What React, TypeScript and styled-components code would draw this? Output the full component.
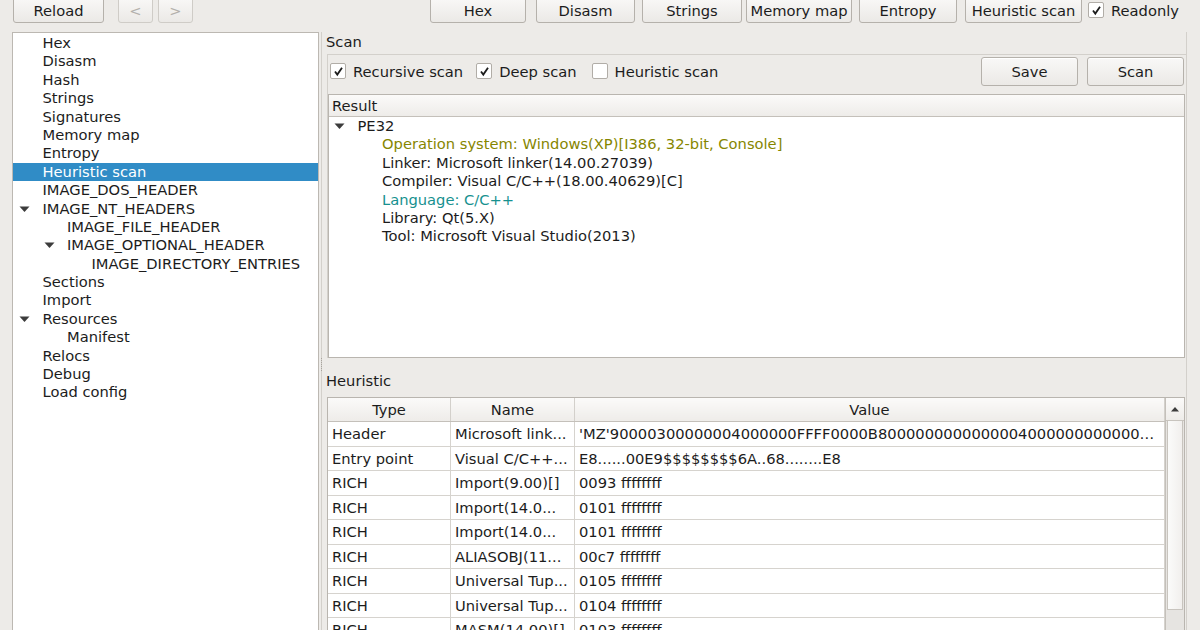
import React from "react";
import styled, { createGlobalStyle } from "styled-components";

const GlobalStyle = createGlobalStyle`
  html, body {
    margin: 0;
    padding: 0;
    background: #edebe8;
    font-family: "DejaVu Sans", "Noto Sans", sans-serif;
    font-size: 14.7px;
    color: #1c1c1c;
    overflow: hidden;
  }
`;

const Window = styled.div`
  width: 1200px;
  height: 630px;
  display: flex;
  flex-direction: column;
  overflow: hidden;
`;

const Toolbar = styled.div`
  display: flex;
  align-items: flex-start;
  height: 30px;
  margin-top: -3px;
  padding: 0 21px 0 13px;
`;

const Spacer = styled.div`
  flex: 1;
`;

const Button = styled.button<{ $w: number; $h?: number; $gap?: number }>`
  width: ${(p) => p.$w}px;
  height: ${(p) => p.$h ?? 26}px;
  margin-right: ${(p) => p.$gap ?? 0}px;
  padding: 0;
  font: inherit;
  color: ${(p) => (p.disabled ? "#b3b0ab" : "#1c1c1c")};
  background: linear-gradient(#f9f8f7, #ebe9e6);
  border: 1px solid ${(p) => (p.disabled ? "#cfccc7" : "#b5b1ab")};
  border-radius: 3px;
  box-shadow: inset 0 1px 0 #ffffff;
  white-space: nowrap;
`;

const CheckRow = styled.label<{ $gap?: number }>`
  display: flex;
  align-items: center;
  gap: 7px;
  height: 26px;
  margin-right: ${(p) => p.$gap ?? 0}px;
  white-space: nowrap;
`;

const Box = styled.span`
  width: 14px;
  height: 14px;
  background: #ffffff;
  border: 1px solid #b1ada7;
  border-radius: 2px;
  display: flex;
  align-items: center;
  justify-content: center;
`;

const Body = styled.div`
  flex: 1;
  display: flex;
  padding-left: 12px;
  padding-top: 5px;
  min-height: 0;
`;

const Sidebar = styled.div`
  width: 305px;
  background: #ffffff;
  border: 1px solid #bcb8b2;
  border-bottom: none;
  padding-top: 1px;
`;

const TreeRow = styled.div<{ $level: number; $selected?: boolean }>`
  height: 18.4px;
  line-height: 18.4px;
  display: flex;
  align-items: center;
  padding-left: ${(p) => 5 + p.$level * 24.5}px;
  background: ${(p) => (p.$selected ? "#308cc6" : "transparent")};
  color: ${(p) => (p.$selected ? "#ffffff" : "#1c1c1c")};
  white-space: nowrap;
`;

const Arrow = styled.span`
  width: 24.5px;
  flex-shrink: 0;
  display: flex;
  align-items: center;
  padding-left: 1px;
  box-sizing: border-box;
`;

const RightPane = styled.div`
  flex: 1;
  margin-left: 2px;
  border-left: 1px solid #d3d0cb;
  margin-right: 13px;
  border-right: 1px solid #d3d0cb;
  display: flex;
  flex-direction: column;
  min-width: 0;
`;

const SectionLabel = styled.div`
  height: 19px;
  line-height: 19px;
  padding-left: 4px;
`;

const ScanFrame = styled.div`
  margin: 3px 0 0 5px;
  border-top: 1px solid #d3d0cb;
  border-left: 1px solid #d3d0cb;
  padding: 1px 0 0 0;
  display: flex;
  flex-direction: column;
`;

const OptionsBar = styled.div`
  display: flex;
  align-items: center;
  height: 30px;
  padding-left: 2px;
  margin-bottom: 8px;
  margin-right: 2px;
`;

const ResultBox = styled.div`
  height: 264px;
  background: #ffffff;
  border: 1px solid #b9b5af;
  margin-right: 1px;
  box-sizing: border-box;
`;

const HeaderCell = styled.div`
  height: 22px;
  line-height: 22px;
  background: linear-gradient(#fbfaf9, #eeece9);
  border-bottom: 1px solid #c4c0ba;
  padding-left: 3px;
  box-sizing: border-box;
`;

const ResultRow = styled.div<{ $indent: number; $color?: string }>`
  height: 18.4px;
  line-height: 18.4px;
  display: flex;
  align-items: center;
  padding-left: ${(p) => p.$indent}px;
  color: ${(p) => p.$color ?? "#1c1c1c"};
  white-space: nowrap;
`;

const Splitter = styled.div<{ $h: number }>`
  height: ${(p) => p.$h}px;
  display: flex;
  align-items: center;
`;

const Grip = styled.div`
  width: 1px;
  height: 13px;
  margin-left: -1px;
  border-left: 1px dotted #a8a49e;
`;

const TableWrap = styled.div`
  flex: 1;
  margin: 0 1px 0 5px;
  display: flex;
  background: #ffffff;
  border: 1px solid #b9b5af;
  border-bottom: none;
  min-height: 0;
  overflow: hidden;
`;

const TableArea = styled.div`
  flex: 1;
  min-width: 0;
`;

const Table = styled.table`
  width: 100%;
  border-collapse: collapse;
  table-layout: fixed;
`;

const Th = styled.th<{ $w?: number }>`
  width: ${(p) => (p.$w ? `${p.$w}px` : "auto")};
  height: 23px;
  padding: 0;
  font-weight: normal;
  background: linear-gradient(#fbfaf9, #eeece9);
  border-right: 1px solid #d3d0cb;
  border-bottom: 1px solid #c4c0ba;
  text-align: center;
`;

const Td = styled.td`
  height: 23.5px;
  padding: 0 2px 0 4px;
  border-right: 1px solid #d6d3ce;
  border-bottom: 1px solid #d6d3ce;
  white-space: nowrap;
  overflow: hidden;
  text-overflow: ellipsis;
`;

const ScrollBar = styled.div`
  width: 18px;
  display: flex;
  flex-direction: column;
  border-left: 1px solid #c4c0ba;
  background: #e6e4e1;
`;

const ScrollButton = styled.div`
  height: 22px;
  display: flex;
  align-items: center;
  justify-content: center;
  background: linear-gradient(#fbfaf9, #eeece9);
  border-bottom: 1px solid #c8c4be;
`;

const Thumb = styled.div`
  height: 188px;
  margin: 0 1px;
  background: linear-gradient(90deg, #fbfbfa, #f1efed);
  border: 1px solid #c8c4be;
  border-top: none;
`;

const Check = () => (
  <svg width="11" height="11" viewBox="0 0 11 11">
    <path d="M2 5.5 L4.3 8.6 L9 1.8" fill="none" stroke="#1c1c1c" strokeWidth="1.8" />
  </svg>
);

const Tri = () => (
  <svg width="11" height="8" viewBox="0 0 11 8">
    <path d="M0.5 1.5 L10.5 1.5 L5.5 7 Z" fill="#3c3c3c" />
  </svg>
);

const CheckBox = ({ label, checked, gap }: { label: string; checked: boolean; gap?: number }) => (
  <CheckRow $gap={gap}>
    <Box>{checked && <Check />}</Box>
    {label}
  </CheckRow>
);

const treeItems: { text: string; level: number; open?: boolean; selected?: boolean }[] = [
  { text: "Hex", level: 0 },
  { text: "Disasm", level: 0 },
  { text: "Hash", level: 0 },
  { text: "Strings", level: 0 },
  { text: "Signatures", level: 0 },
  { text: "Memory map", level: 0 },
  { text: "Entropy", level: 0 },
  { text: "Heuristic scan", level: 0, selected: true },
  { text: "IMAGE_DOS_HEADER", level: 0 },
  { text: "IMAGE_NT_HEADERS", level: 0, open: true },
  { text: "IMAGE_FILE_HEADER", level: 1 },
  { text: "IMAGE_OPTIONAL_HEADER", level: 1, open: true },
  { text: "IMAGE_DIRECTORY_ENTRIES", level: 2 },
  { text: "Sections", level: 0 },
  { text: "Import", level: 0 },
  { text: "Resources", level: 0, open: true },
  { text: "Manifest", level: 1 },
  { text: "Relocs", level: 0 },
  { text: "Debug", level: 0 },
  { text: "Load config", level: 0 },
];

const results = [
  { text: "Operation system: Windows(XP)[I386, 32-bit, Console]", color: "#868600" },
  { text: "Linker: Microsoft linker(14.00.27039)" },
  { text: "Compiler: Visual C/C++(18.00.40629)[C]" },
  { text: "Language: C/C++", color: "#17918f" },
  { text: "Library: Qt(5.X)" },
  { text: "Tool: Microsoft Visual Studio(2013)" },
];

const rows = [
  ["Header", "Microsoft link...", "'MZ'90000300000004000000FFFF0000B800000000000000400000000000000000000000000000"],
  ["Entry point", "Visual C/C++...", "E8......00E9$$$$$$$$6A..68........E8"],
  ["RICH", "Import(9.00)[]", "0093 ffffffff"],
  ["RICH", "Import(14.0...", "0101 ffffffff"],
  ["RICH", "Import(14.0...", "0101 ffffffff"],
  ["RICH", "ALIASOBJ(11...", "00c7 ffffffff"],
  ["RICH", "Universal Tup...", "0105 ffffffff"],
  ["RICH", "Universal Tup...", "0104 ffffffff"],
  ["RICH", "MASM(14.00)[]", "0103 ffffffff"],
];

export default function App() {
  return (
    <Window>
      <GlobalStyle />
      <Toolbar>
        <Button $w={91} $gap={14}>Reload</Button>
        <Button $w={35} $gap={5} disabled>&lt;</Button>
        <Button $w={35} disabled>&gt;</Button>
        <Spacer />
        <Button $w={96} $gap={10}>Hex</Button>
        <Button $w={99} $gap={7}>Disasm</Button>
        <Button $w={100} $gap={4}>Strings</Button>
        <Button $w={106} $gap={7}>Memory map</Button>
        <Button $w={98} $gap={8}>Entropy</Button>
        <Button $w={117} $gap={6}>Heuristic scan</Button>
        <CheckBox label="Readonly" checked />
      </Toolbar>
      <Body>
        <Sidebar>
          {treeItems.map((item, i) => (
            <TreeRow key={i} $level={item.level} $selected={item.selected}>
              <Arrow>{item.open && <Tri />}</Arrow>
              {item.text}
            </TreeRow>
          ))}
        </Sidebar>
        <RightPane>
          <SectionLabel>Scan</SectionLabel>
          <ScanFrame>
            <OptionsBar>
              <CheckBox label="Recursive scan" checked gap={13} />
              <CheckBox label="Deep scan" checked gap={15} />
              <CheckBox label="Heuristic scan" checked={false} />
              <Spacer />
              <Button $w={97} $h={29} $gap={9}>Save</Button>
              <Button $w={97} $h={29}>Scan</Button>
            </OptionsBar>
            <ResultBox>
              <HeaderCell>Result</HeaderCell>
              <ResultRow $indent={4}>
                <Arrow>
                  <Tri />
                </Arrow>
                PE32
              </ResultRow>
              {results.map((r, i) => (
                <ResultRow key={i} $indent={53} $color={r.color}>
                  {r.text}
                </ResultRow>
              ))}
            </ResultBox>
          </ScanFrame>
          <Splitter $h={13}>
            <Grip />
          </Splitter>
          <SectionLabel>Heuristic</SectionLabel>
          <Splitter $h={7} />
          <TableWrap>
            <TableArea>
              <Table>
                <thead>
                  <tr>
                    <Th $w={122}>Type</Th>
                    <Th $w={123}>Name</Th>
                    <Th>Value</Th>
                  </tr>
                </thead>
                <tbody>
                  {rows.map((r, i) => (
                    <tr key={i}>
                      <Td>{r[0]}</Td>
                      <Td>{r[1]}</Td>
                      <Td>{r[2]}</Td>
                    </tr>
                  ))}
                </tbody>
              </Table>
            </TableArea>
            <ScrollBar>
              <ScrollButton>
                <svg width="10" height="6" viewBox="0 0 10 6">
                  <path d="M1 5.5 L9 5.5 L5 1 Z" fill="#3c3c3c" />
                </svg>
              </ScrollButton>
              <Thumb />
            </ScrollBar>
          </TableWrap>
        </RightPane>
      </Body>
    </Window>
  );
}
